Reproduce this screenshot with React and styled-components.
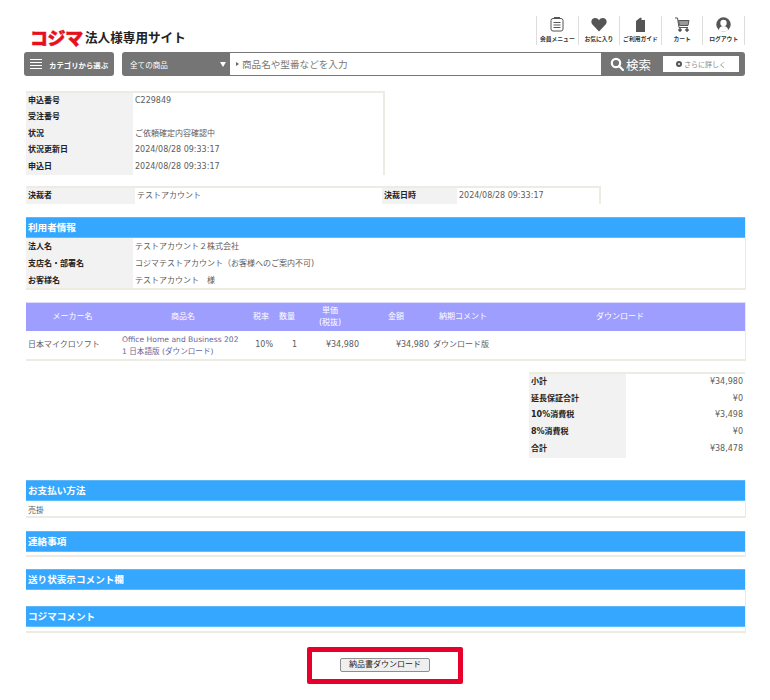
import React from "react";
import styled, { createGlobalStyle } from "styled-components";

const GlobalStyle = createGlobalStyle`
  html, body {
    margin: 0;
    background: #fff;
  }
  body {
    font-family: "DejaVu Sans", "Noto Sans CJK JP", sans-serif;
    font-size: 8px;
    color: #5c5c5c;
  }
  * { box-sizing: border-box; }
`;

const Page = styled.div`
  width: 770px;
  padding: 0 24px;
`;

const Header = styled.header`
  height: 52px;
  margin-right: 1px;
  display: flex;
  justify-content: space-between;
  align-items: flex-start;
`;

const Brand = styled.div`
  display: flex;
  align-items: center;
  gap: 3px;
  margin: 28px 0 0 6px;
`;

const BrandMark = styled.span`
  width: 52px;
  font: 900 18px/18px "Noto Sans CJK JP", sans-serif;
  letter-spacing: -0.4px;
  color: #e60f1e;
  -webkit-text-stroke: 0.5px #e60f1e;
  white-space: nowrap;
`;

const BrandText = styled.span`
  font: 700 12.6px/18px "Noto Sans CJK JP", sans-serif;
  color: #222;
`;

const IconNav = styled.nav`
  display: flex;
  margin-top: 16px;
  border-right: 1px solid #ddd;
`;

const IconLink = styled.a`
  width: 41.6px;
  height: 29px;
  padding: 1px 0 3px;
  border-left: 1px solid #ddd;
  display: flex;
  flex-direction: column;
  align-items: center;
  justify-content: space-between;
  font: 700 5.8px/7px "Noto Sans CJK JP", sans-serif;
  color: #333;
  white-space: nowrap;
  svg { display: block; }
`;

const SearchRow = styled.div`
  display: flex;
  height: 24px;
  margin-right: 1px;
  gap: 8px;
`;

const CategoryButton = styled.button`
  width: 90px;
  border: 0;
  border-radius: 3px;
  background: #757575;
  color: #fff;
  display: flex;
  align-items: center;
  gap: 7px;
  padding: 0 0 0 6px;
  font: 700 7.4px "Noto Sans CJK JP", sans-serif;
  white-space: nowrap;
`;

const Burger = styled.span`
  width: 12px;
  height: 10px;
  background: repeating-linear-gradient(#fff 0 1px, transparent 1px 3px);
`;

const SearchBox = styled.div`
  flex: 1;
  display: flex;
  background: #757575;
  border-radius: 3px;
`;

const ScopeSelect = styled.div`
  width: 108px;
  display: flex;
  align-items: center;
  justify-content: space-between;
  padding: 0 4px 0 8px;
  color: #fff;
  font: 400 7.6px "Noto Sans CJK JP", sans-serif;
`;

const Caret = styled.span`
  width: 0;
  height: 0;
  border-left: 3px solid transparent;
  border-right: 3px solid transparent;
  border-top: 5px solid #fff;
`;

const SearchField = styled.div`
  width: 371px;
  margin: 1px 0;
  background: #fff;
  display: flex;
  align-items: center;
  gap: 3px;
  padding-left: 6px;
  font: 400 9.6px "Noto Sans CJK JP", sans-serif;
  color: #777;
`;

const FieldMark = styled.span`
  width: 0;
  height: 0;
  border-top: 2.5px solid transparent;
  border-bottom: 2.5px solid transparent;
  border-left: 3px solid #667;
`;

const SearchAction = styled.div`
  flex: 1;
  display: flex;
  align-items: center;
  padding-left: 9px;
  gap: 2px;
  color: #fff;
  font: 400 12.5px "Noto Sans CJK JP", sans-serif;
`;

const MoreButton = styled.div`
  width: 76px;
  height: 16px;
  margin-left: 10px;
  background: #fff;
  display: flex;
  align-items: center;
  justify-content: center;
  gap: 2px;
  color: #888;
  font: 400 7px "Noto Sans CJK JP", sans-serif;
`;

const PlusDot = styled.span`
  width: 6px;
  height: 6px;
  border-radius: 50%;
  border: 2px solid #555;
`;

const Main = styled.main`
  padding-left: 2px;
  display: flex;
  flex-direction: column;
`;

const InfoTable = styled.table`
  width: ${(p) => p.$width || "100%"};
  margin: ${(p) => p.$margin || "0"};
  border-collapse: collapse;
  table-layout: fixed;
  border-top: ${(p) => (p.$bare ? "0" : "2px solid #ecece2")};
  border-right: ${(p) => (p.$bare || p.$noRight ? "0" : "2px solid #ecece2")};
  th, td {
    height: ${(p) => p.$rowHeight || 16.7}px;
    padding: ${(p) => (p.$bare ? "2px 2px 0" : "0 2px")};
    font-size: 8px;
    font-weight: 400;
    line-height: 10px;
    white-space: nowrap;
  }
  th {
    background: #f2f2f2;
    color: #222;
    font-weight: 700;
    text-align: left;
  }
  td {
    text-align: ${(p) => p.$valueAlign || "left"};
  }
`;

const Section = styled.section`
  margin: ${(p) => p.$margin || "0"};
  border-right: 1px solid #ecece2;
  border-bottom: ${(p) => (p.$open ? "0" : "2px solid #ecece2")};
`;

const SectionTitle = styled.h2`
  margin: 0;
  height: 21px;
  padding: 0 2px;
  background: #36a7ff;
  border-top: 1px solid #5fb8f5;
  border-bottom: 1px solid #5cc0ff;
  color: #fff;
  font-size: 9.6px;
  font-weight: 700;
  line-height: 19px;
`;

const SectionBody = styled.div`
  height: ${(p) => p.$height}px;
  font-size: 8px;
  line-height: 10px;
  color: #5c5c5c;
`;

const SectionNote = styled.p`
  margin: 0;
  padding: 5px 2px 0;
`;

const OrderGrid = styled.div`
  display: grid;
  grid-template-columns: 93px 128px 28px 24px 62px 70px 64px 250px;
`;

const OrderTable = styled.div`
  margin-top: 12px;
  border-top: 1px solid #dcdcff;
  border-right: 1px solid #ecece2;
  border-bottom: 2px solid #ecece2;
`;

const OrderHead = styled(OrderGrid)`
  height: 28px;
  background: #9e9eff;
  color: #fff;
  align-items: center;
  text-align: center;
  font-size: 8px;
  line-height: 12px;
`;

const OrderRow = styled(OrderGrid)`
  height: 28px;
  align-items: center;
  font-size: 8px;
  line-height: 12px;
  color: #5c5c5c;
`;

const OrderCell = styled.div`
  padding: 0 2px;
  text-align: ${(p) => p.$align || "left"};
  white-space: ${(p) => (p.$wrap ? "pre-line" : "nowrap")};
`;

const ProductLink = styled.a`
  display: block;
  margin-top: 1px;
  padding-left: 1px;
  color: #66669c;
  font-size: 7.6px;
  white-space: pre;
`;

const Summary = styled.div`
  display: flex;
  justify-content: flex-end;
  margin: 11px 0 22px;
  padding-right: 1px;
`;

const Footer = styled.div`
  display: flex;
  justify-content: center;
  margin-top: 14px;
  padding-right: 2px;
`;

const Highlight = styled.div`
  width: 156px;
  height: 37px;
  border: 5px solid #e8002d;
  border-radius: 2px;
  display: flex;
  align-items: center;
  justify-content: center;
`;

const DownloadButton = styled.button`
  width: 90px;
  height: 14px;
  padding: 0;
  background: #efefef;
  border: 1px solid #8f8f8f;
  border-radius: 2px;
  color: #222;
  font: 400 8px/12px "DejaVu Sans", "Noto Sans CJK JP", sans-serif;
`;

const iconColor = "#555";

const MenuIcon = () => (
  <svg width="14" height="15" viewBox="0 0 14 15" fill="none" stroke={iconColor}>
    <rect x="1" y="1.5" width="12" height="12.5" rx="2" />
    <path d="M3.5 5.5h7M3.5 8h7M3.5 10.5h7" />
    <path d="M4 1h6" strokeWidth="2" />
  </svg>
);

const HeartIcon = () => (
  <svg width="16" height="15" viewBox="0 0 16 15" fill={iconColor}>
    <path d="M8 14.500 1.400 7.600C-.6 5.400.3 1.400 3.700 1c1.800-.2 3.400.7 4.300 2.200C8.900 1.700 10.500.8 12.300 1c3.400.4 4.300 4.400 2.300 6.600z" />
  </svg>
);

const GuideIcon = () => (
  <svg width="11" height="15" viewBox="0 0 11 15" fill={iconColor}>
    <path d="M1 4 5 .8h1.500V3H10v12H1z" />
  </svg>
);

const CartIcon = () => (
  <svg width="15" height="15" viewBox="0 0 15 15" fill="none" stroke={iconColor}>
    <path d="M0 1h2.500l1.500 9.500h9" />
    <path d="M3.500 3.500H14l-1 5H4.500z" fill="#999" />
    <circle cx="5" cy="13" r="1.300" fill={iconColor} />
    <circle cx="12" cy="13" r="1.300" fill={iconColor} />
  </svg>
);

const UserIcon = () => (
  <svg width="15" height="15" viewBox="0 0 15 15">
    <circle cx="7.500" cy="7.500" r="7.200" fill={iconColor} />
    <circle cx="7.500" cy="6" r="3.200" fill="#fff" />
    <path d="M2.800 13c.6-3 2.500-4 4.700-4s4.100 1 4.700 4a7 7 0 0 1-9.400 0z" fill="#fff" />
  </svg>
);

const SearchIcon = () => (
  <svg width="14" height="14" viewBox="0 0 14 14" fill="none" stroke="#fff" strokeWidth="2.200">
    <circle cx="6" cy="6" r="4.200" />
    <path d="m9 9 4 4" strokeLinecap="round" />
  </svg>
);

const navItems = [
  { label: "会員メニュー", icon: <MenuIcon /> },
  { label: "お気に入り", icon: <HeartIcon /> },
  { label: "ご利用ガイド", icon: <GuideIcon /> },
  { label: "カート", icon: <CartIcon /> },
  { label: "ログアウト", icon: <UserIcon /> },
];

const statusRows = [
  ["申込番号", "C229849"],
  ["受注番号", ""],
  ["状況", "ご依頼確定内容確認中"],
  ["状況更新日", "2024/08/28 09:33:17"],
  ["申込日", "2024/08/28 09:33:17"],
];

const customerRows = [
  ["法人名", "テストアカウント２株式会社"],
  ["支店名・部署名", "コジマテストアカウント（お客様へのご案内不可)"],
  ["お客様名", "テストアカウント　様"],
];

const summaryRows = [
  ["小計", "¥34,980"],
  ["延長保証合計", "¥0"],
  ["10%消費税", "¥3,498"],
  ["8%消費税", "¥0"],
  ["合計", "¥38,478"],
];

const orderHeads = ["メーカー名", "商品名", "税率", "数量", "単価\n(税抜)", "金額", "納期コメント", "ダウンロード"];

function Rows({ rows }) {
  return (
    <tbody>
      {rows.map(([label, value]) => (
        <tr key={label}>
          <th>{label}</th>
          <td>{value}</td>
        </tr>
      ))}
    </tbody>
  );
}

export default function App() {
  return (
    <Page>
      <GlobalStyle />
      <Header>
        <Brand>
          <BrandMark>コジマ</BrandMark>
          <BrandText>法人様専用サイト</BrandText>
        </Brand>
        <IconNav>
          {navItems.map((item) => (
            <IconLink key={item.label}>
              {item.icon}
              {item.label}
            </IconLink>
          ))}
        </IconNav>
      </Header>

      <SearchRow>
        <CategoryButton>
          <Burger />
          カテゴリから選ぶ
        </CategoryButton>
        <SearchBox>
          <ScopeSelect>
            全ての商品
            <Caret />
          </ScopeSelect>
          <SearchField>
            <FieldMark />
            商品名や型番などを入力
          </SearchField>
          <SearchAction>
            <SearchIcon />
            検索
            <MoreButton>
              <PlusDot />
              さらに詳しく
            </MoreButton>
          </SearchAction>
        </SearchBox>
      </SearchRow>

      <Main>
        <InfoTable $width="359px" $margin="15px 0 0">
          <colgroup>
            <col width="107" />
            <col />
          </colgroup>
          <Rows rows={statusRows} />
        </InfoTable>

        <InfoTable $width="575px" $margin="11px 0 0">
          <colgroup>
            <col width="109" />
            <col width="247" />
            <col width="75" />
            <col />
          </colgroup>
          <tbody>
            <tr>
              <th>決裁者</th>
              <td>テストアカウント</td>
              <th>決裁日時</th>
              <td>2024/08/28 09:33:17</td>
            </tr>
          </tbody>
        </InfoTable>

        <Section $margin="13px 0 0">
          <SectionTitle>利用者情報</SectionTitle>
          <InfoTable $bare>
            <colgroup>
              <col width="107" />
              <col />
            </colgroup>
            <Rows rows={customerRows} />
          </InfoTable>
        </Section>

        <OrderTable>
          <OrderHead>
            {orderHeads.map((head) => (
              <OrderCell key={head} $align="center" $wrap>
                {head}
              </OrderCell>
            ))}
          </OrderHead>
          <OrderRow>
            <OrderCell>日本マイクロソフト</OrderCell>
            <OrderCell>
              <ProductLink>{"Office Home and Business 202\n1 日本語版 (ダウンロード)"}</ProductLink>
            </OrderCell>
            <OrderCell $align="right">10%</OrderCell>
            <OrderCell $align="right">1</OrderCell>
            <OrderCell $align="right">¥34,980</OrderCell>
            <OrderCell $align="right">¥34,980</OrderCell>
            <OrderCell>ダウンロード版</OrderCell>
            <OrderCell />
          </OrderRow>
        </OrderTable>

        <Summary>
          <InfoTable $width="216px" $valueAlign="right" $noRight $rowHeight={16.9}>
            <colgroup>
              <col width="97" />
              <col />
            </colgroup>
            <Rows rows={summaryRows} />
          </InfoTable>
        </Summary>

        <Section>
          <SectionTitle>お支払い方法</SectionTitle>
          <SectionBody $height={15}>
            <SectionNote>売掛</SectionNote>
          </SectionBody>
        </Section>
        <Section $margin="13px 0 0">
          <SectionTitle>連絡事項</SectionTitle>
          <SectionBody $height={3} />
        </Section>
        <Section $margin="12px 0 0" $open>
          <SectionTitle>送り状表示コメント欄</SectionTitle>
          <SectionBody $height={16} />
        </Section>
        <Section>
          <SectionTitle>コジマコメント</SectionTitle>
          <SectionBody $height={4} />
        </Section>

        <Footer>
          <Highlight>
            <DownloadButton>納品書ダウンロード</DownloadButton>
          </Highlight>
        </Footer>
      </Main>
    </Page>
  );
}
